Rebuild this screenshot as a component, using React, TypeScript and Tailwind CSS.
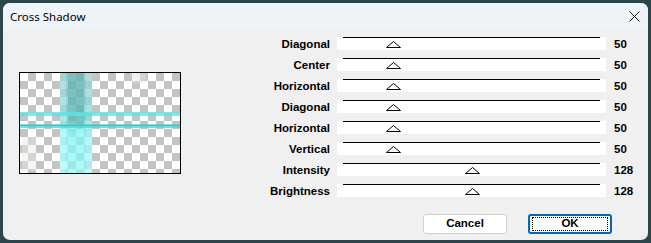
import type { ReactNode } from "react";

const ROWS: { label: string; value: number }[] = [
  { label: "Diagonal", value: 50 },
  { label: "Center", value: 50 },
  { label: "Horizontal", value: 50 },
  { label: "Diagonal", value: 50 },
  { label: "Horizontal", value: 50 },
  { label: "Vertical", value: 50 },
  { label: "Intensity", value: 128 },
  { label: "Brightness", value: 128 },
];

const TRACK_START = 6;
const TRACK_LEN = 257;

function Thumb({ value }: { value: number }) {
  const center = TRACK_START + (value / 255) * TRACK_LEN;
  return (
    <svg
      className="absolute top-[4px]"
      style={{ left: center - 7.5 }}
      width="15"
      height="7"
      viewBox="0 0 15 7"
    >
      <polygon points="7.5,0.5 14.5,6.5 0.5,6.5" fill="#ffffff" stroke="#000000" strokeWidth="1" />
    </svg>
  );
}

function SliderRow({ label, value }: { label: string; value: number }) {
  return (
    <div className="flex h-[21px] items-start">
      <div className="w-[80px] pt-[3px] text-right text-[11.5px] font-bold leading-[16px] text-black">
        {label}
      </div>
      <div className="relative ml-[7px] mt-[4px] h-[13px] w-[269px] bg-white">
        <div className="ml-[6px] h-px w-[257px] bg-black" />
        <Thumb value={value} />
      </div>
      <div className="ml-[8px] pt-[3px] text-[11.5px] font-bold leading-[16px] text-black">{value}</div>
    </div>
  );
}

function Preview() {
  return (
    <div className="h-[102px] w-[162px] border border-black bg-white">
      <svg width="160" height="100" viewBox="0 0 160 100">
        <defs>
          <pattern id="checks" width="16" height="16" patternUnits="userSpaceOnUse">
            <rect width="16" height="16" fill="#ffffff" />
            <rect x="8" width="8" height="8" fill="#c4c4c4" />
            <rect y="8" width="8" height="8" fill="#c4c4c4" />
          </pattern>
          <linearGradient id="band" x1="0" y1="0" x2="0" y2="1">
            <stop offset="0" stopColor="#7cc4c4" stopOpacity="0.75" />
            <stop offset="0.45" stopColor="#66cccc" stopOpacity="0.7" />
            <stop offset="0.6" stopColor="#7ff5f5" stopOpacity="0.75" />
            <stop offset="1" stopColor="#8ff7f7" stopOpacity="0.7" />
          </linearGradient>
        </defs>
        <rect width="160" height="100" fill="url(#checks)" />
        {/* faint streaks */}
        <rect x="112" y="0" width="14" height="10" fill="#dfe8d8" opacity="0.5" />
        <rect x="2" y="64" width="14" height="34" fill="#e6ece0" opacity="0.45" />
        {/* vertical band */}
        <rect x="40" y="0" width="32" height="100" fill="url(#band)" />
        <rect x="48" y="0" width="16" height="52" fill="#5aa6a6" opacity="0.45" />
        <rect x="40" y="0" width="6" height="100" fill="#ffffff" opacity="0.25" />
        <rect x="66" y="0" width="6" height="100" fill="#ffffff" opacity="0.2" />
        {/* horizontal lines */}
        <rect x="0" y="39" width="160" height="4" fill="#55e6e6" opacity="0.8" />
        <rect x="0" y="51" width="160" height="4" fill="#4fd8d8" opacity="0.8" />
        <rect x="0" y="52" width="160" height="1" fill="#3aa9b0" opacity="0.6" />
      </svg>
    </div>
  );
}

function DialogButton({ children, focused }: { children: ReactNode; focused?: boolean }) {
  return focused ? (
    <div className="flex h-[20px] w-[84px] items-center justify-center rounded-[3px] border-2 border-[#0067c0] bg-white">
      <div className="flex h-[14px] w-[76px] items-center justify-center border border-dotted border-black text-[11.5px] font-bold text-black">
        {children}
      </div>
    </div>
  ) : (
    <div className="flex h-[20px] w-[84px] items-center justify-center rounded-[3px] border border-[#d0d0d0] bg-white text-[11.5px] font-bold text-black">
      {children}
    </div>
  );
}

export default function App() {
  return (
    <div className="h-[243px] w-[651px] bg-[#2c474b] pl-[3px] pt-[3px] font-['Liberation_Sans',Arial,sans-serif]">
      <div className="flex h-[237px] w-[645px] flex-col overflow-hidden rounded-[7px] bg-[#f0f0f0]">
        <div className="flex h-[27px] items-center justify-between bg-[#eff4f9] pl-[7px] pr-[8px]">
          <span className="font-['Noto_Sans',sans-serif] text-[11.5px] text-black">Cross Shadow</span>
          <svg width="11" height="11" viewBox="0 0 11 11">
            <path d="M0.5 0.5 L10.5 10.5 M10.5 0.5 L0.5 10.5" stroke="#1a1a1a" strokeWidth="1" />
          </svg>
        </div>
        <div className="flex">
          <div className="ml-[16px] mt-[42px]">
            <Preview />
          </div>
          <div className="ml-[69px] flex flex-col pt-[3px]">
            {ROWS.map((r, i) => (
              <SliderRow key={i} label={r.label} value={r.value} />
            ))}
            <div className="mt-[13px] flex gap-[21px] pl-[173px]">
              <DialogButton>Cancel</DialogButton>
              <DialogButton focused>OK</DialogButton>
            </div>
          </div>
        </div>
      </div>
    </div>
  );
}
